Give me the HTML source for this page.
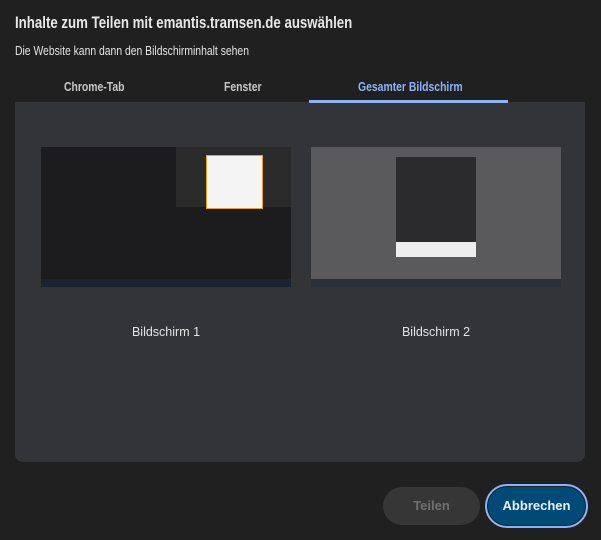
<!DOCTYPE html>
<html><head><style>
body{margin:0;width:601px;height:540px;background:#202020;font-family:"Liberation Sans",sans-serif;position:relative;overflow:hidden;color:#e3e3e3}
.a{position:absolute}
.s{transform-origin:left top;white-space:nowrap}
</style></head><body>
<div class="a s" style="left:15px;top:13px;font-size:17px;font-weight:bold;color:#e8e8e8;transform:scaleX(0.78)">Inhalte zum Teilen mit emantis.tramsen.de auswählen</div>
<div class="a s" style="left:15px;top:44px;font-size:12.5px;color:#e3e3e3;transform:scaleX(0.83)">Die Website kann dann den Bildschirminhalt sehen</div>
<div class="a" style="left:64px;top:79px;font-size:13px;font-weight:bold;color:#c8c8c8;transform:scaleX(0.8);transform-origin:left top">Chrome-Tab</div>
<div class="a" style="left:224px;top:79px;font-size:13px;font-weight:bold;color:#c8c8c8;transform:scaleX(0.8);transform-origin:left top">Fenster</div>
<div class="a" style="left:358px;top:79px;font-size:13px;font-weight:bold;color:#8ab4f8;transform:scaleX(0.8);transform-origin:left top;white-space:nowrap">Gesamter Bildschirm</div>
<div class="a" style="left:15px;top:102px;width:570px;height:360px;background:#333438;border-radius:0 0 8px 8px"></div>
<div class="a" style="left:309px;top:100px;width:199px;height:3px;background:#8ab4f8"></div>
<div class="a" style="left:41px;top:147px;width:250px;height:140px;background:#1c1c1e">
 <div class="a" style="left:135px;top:0;width:115px;height:60px;background:#2a2a2a"></div>
 <div class="a" style="left:165px;top:8px;width:55px;height:52px;background:#f4f4f4;border:1px solid #e8a020"></div>
 <div class="a" style="left:0;top:132px;width:250px;height:8px;background:#1a2233"></div>
</div>
<div class="a" style="left:311px;top:147px;width:250px;height:140px;background:#5a5a5c">
 <div class="a" style="left:85px;top:10px;width:80px;height:100px;background:#2b2b2d"></div>
 <div class="a" style="left:85px;top:95px;width:80px;height:15px;background:#eee"></div>
 <div class="a" style="left:0;top:132px;width:250px;height:8px;background:#2a2f3a"></div>
</div>
<div class="a" style="left:41px;top:325px;width:250px;text-align:center;font-size:12.5px">Bildschirm 1</div>
<div class="a" style="left:311px;top:325px;width:250px;text-align:center;font-size:12.5px">Bildschirm 2</div>
<div class="a" style="left:383px;top:487px;width:97px;height:38px;border-radius:19px;background:#363636;color:#707070;font-size:13px;font-weight:bold;text-align:center;line-height:38px">Teilen</div>
<div class="a" style="left:485px;top:484px;width:99px;height:40px;border-radius:22px;background:#004a77;border:2px solid #8ab4f8;box-shadow:inset 0 0 0 1px #1f1f1f;color:#e8f0fe;font-size:13px;font-weight:bold;text-align:center;line-height:40px">Abbrechen</div>
</body></html>
